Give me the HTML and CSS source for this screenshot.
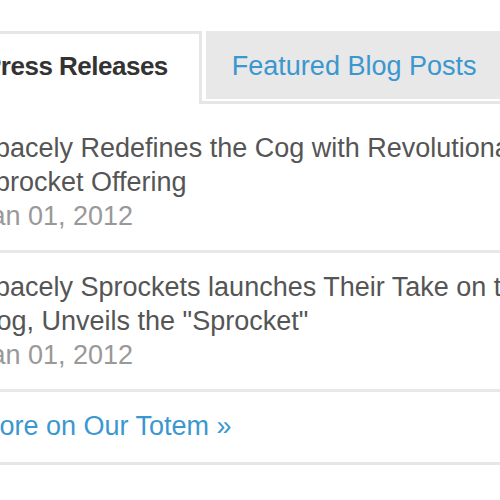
FILE: index.html
```html
<!DOCTYPE html>
<html lang="en">
<head>
    <meta charset="UTF-8">
    <meta name="viewport" content="width=device-width, initial-scale=1.0">
    <title>News Tabs</title>
    <link rel="stylesheet" href="styles.css">
</head>
<body>
    <div class="widget">
        <ul class="tabs">
            <li class="tab active">Press Releases</li>
            <li class="tab">Featured Blog Posts</li>
        </ul>
        <div class="panel">
            <div class="item">
                <a class="title" href="#">Spacely Redefines the Cog with Revolutionary Sprocket Offering</a>
                <div class="date">Jan 01, 2012</div>
            </div>
            <div class="item">
                <a class="title" href="#">Spacely Sprockets launches Their Take on the Cog, Unveils the "Sprocket"</a>
                <div class="date">Jan 01, 2012</div>
            </div>
            <a class="more" href="#">More on Our Totem &raquo;</a>
        </div>
    </div>
</body>
</html>
```

FILE: styles.css
```css
body {
    margin: 0;
    font-family: "Liberation Sans", Arial, sans-serif;
    background-color: #fff;
    overflow: hidden;
}

.widget {
    width: 660px;
    margin: 31px 0 0 -50px;
}

.tabs {
    display: flex;
    gap: 4px;
    list-style: none;
    margin: 0;
    padding: 0;
    height: 70px;
    border-bottom: 3px solid #e6e6e6;
}

.tab {
    box-sizing: border-box;
    height: 68px;
    padding: 18px 26px 0;
    font-size: 27px;
    line-height: 34px;
    color: #3b97cf;
    background-color: #e8e8e8;
    flex: 1;
}

.tab.active {
    flex: none;
    height: 73px;
    margin-bottom: -3px;
    padding: 15px 31px 0;
    border: 3px solid #e6e6e6;
    border-bottom: 0;
    background-color: #fff;
    color: #333;
    font-size: 26px;
    font-weight: bold;
    letter-spacing: -0.5px;
}

.panel {
    border: 3px solid #e6e6e6;
    border-top: 0;
    padding: 10px 24px 19px;
    font-size: 27px;
    line-height: 34px;
}

.item {
    padding: 17px 0;
    border-bottom: 3px solid #e8e8e8;
}

.title {
    color: #555;
    text-decoration: none;
}

.date {
    color: #999;
}

.more {
    display: block;
    padding-top: 17px;
    color: #3b97cf;
    text-decoration: none;
}
```
